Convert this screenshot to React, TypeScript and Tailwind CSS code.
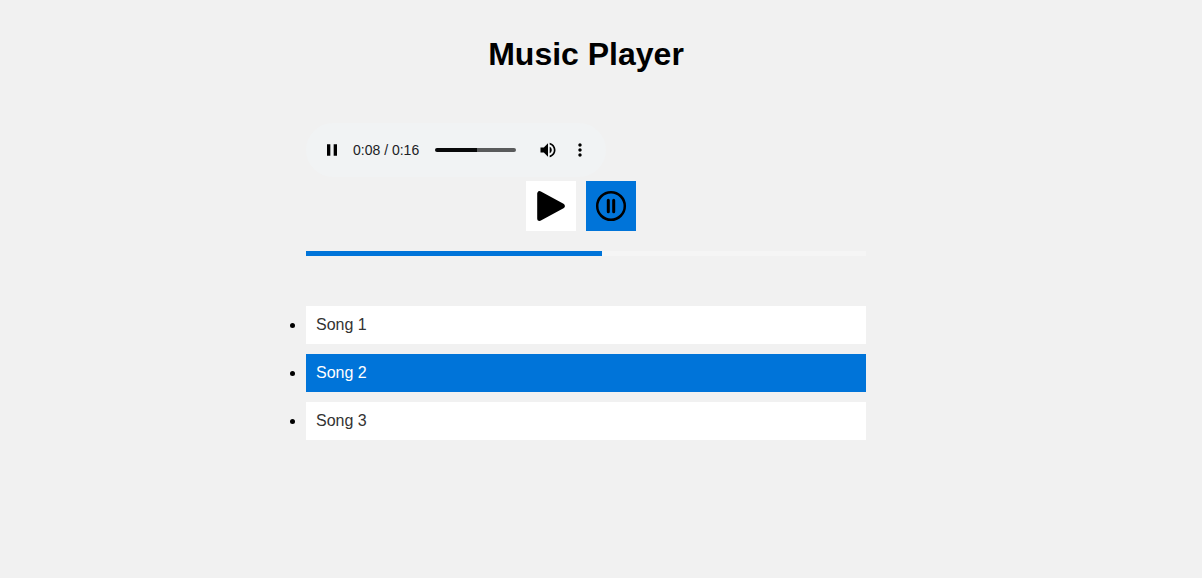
import { useState } from "react";

const songs = ["Song 1", "Song 2", "Song 3"];

function AudioBar() {
  return (
    <div
      role="group"
      aria-label="Audio player"
      className="flex h-[54px] w-[300px] items-center rounded-full bg-[#f1f3f4] px-[10px] text-black"
    >
      <button type="button" aria-label="Pause" className="flex size-8 items-center justify-center">
        <svg viewBox="0 0 24 24" className="size-5" fill="currentColor">
          <path d="M6 19h4V5H6v14zm8-14v14h4V5h-4z" />
        </svg>
      </button>
      <span className="ml-[5px] text-sm whitespace-nowrap text-[#202124]">0:08 / 0:16</span>
      <input
        type="range"
        aria-label="Position"
        min={0}
        max={100}
        defaultValue={52}
        className="mr-4 ml-4 h-1 w-0 min-w-0 flex-1 appearance-none rounded-full bg-[linear-gradient(to_right,#08090a_52%,#5a5b5c_52%)] [&::-webkit-slider-thumb]:size-0 [&::-webkit-slider-thumb]:appearance-none"
      />
      <button type="button" aria-label="Mute" className="flex size-8 items-center justify-center">
        <svg viewBox="0 0 24 24" className="size-5" fill="currentColor">
          <path d="M3 9v6h4l5 5V4L7 9H3zm13.5 3c0-1.77-1.02-3.29-2.5-4.03v8.05c1.48-.73 2.5-2.25 2.5-4.02zM14 3.23v2.06c2.89.86 5 3.54 5 6.71s-2.11 5.85-5 6.71v2.06c4.01-.91 7-4.49 7-8.77s-2.99-7.86-7-8.77z" />
        </svg>
      </button>
      <button type="button" aria-label="More options" className="flex size-8 items-center justify-center">
        <svg viewBox="0 0 24 24" className="size-5" fill="currentColor">
          <path d="M12 8c1.1 0 2-.9 2-2s-.9-2-2-2-2 .9-2 2 .9 2 2 2zm0 2c-1.1 0-2 .9-2 2s.9 2 2 2 2-.9 2-2-.9-2-2-2zm0 6c-1.1 0-2 .9-2 2s.9 2 2 2 2-.9 2-2-.9-2-2-2z" />
        </svg>
      </button>
    </div>
  );
}

export default function App() {
  const [current, setCurrent] = useState(1);

  return (
    <div className="min-h-screen bg-[#f1f1f1] pt-9 pr-[30px] font-['Liberation_Sans',Arial,sans-serif] text-base text-black">
      <main className="mx-auto max-w-[560px]">
        <h1 className="text-center text-[32px] leading-9 font-bold">Music Player</h1>

        <div className="mt-[51px]">
          <AudioBar />
        </div>

        <div className="mt-1 flex justify-center gap-[10px] pr-[10px]">
          <button type="button" aria-label="Play" className="size-[50px] bg-white">
            <svg viewBox="0 0 50 50" className="size-full">
              <path
                d="M13.7 12.6v24.8L36.3 25z"
                fill="#000"
                stroke="#000"
                strokeWidth="5"
                strokeLinejoin="round"
              />
            </svg>
          </button>
          <button type="button" aria-label="Pause" className="size-[50px] bg-[#0074d9]">
            <svg viewBox="0 0 50 50" className="size-full" fill="none" stroke="#000" strokeLinecap="round">
              <circle cx="25" cy="25" r="13.8" strokeWidth="2.5" />
              <path d="M22.3 19.2v11.6M27.7 19.2v11.6" strokeWidth="3" />
            </svg>
          </button>
        </div>

        <div
          role="progressbar"
          aria-label="Song progress"
          aria-valuenow={53}
          aria-valuemin={0}
          aria-valuemax={100}
          className="mt-5 h-[5px] bg-[#f5f5f5]"
        >
          <div className="h-full w-[296px] max-w-full bg-[#0074d9]" />
        </div>

        <ul className="mt-[50px] list-disc space-y-[10px]">
          {songs.map((song, i) => (
            <li key={song}>
              <a
                href="#"
                onClick={(e) => {
                  e.preventDefault();
                  setCurrent(i);
                }}
                className={
                  i === current
                    ? "block bg-[#0074d9] p-[10px] leading-[18px] text-white"
                    : "block bg-white p-[10px] leading-[18px] text-[#333]"
                }
              >
                {song}
              </a>
            </li>
          ))}
        </ul>
      </main>
    </div>
  );
}
